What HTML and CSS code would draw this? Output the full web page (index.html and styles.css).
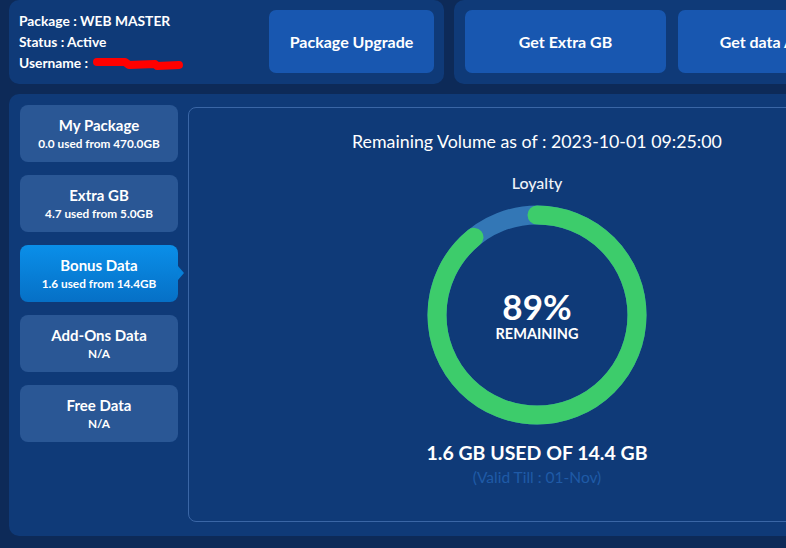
FILE: index.html
```html
<!DOCTYPE html>
<html>
<head>
  <title>Data Usage</title>
  <link rel="stylesheet" href="styles.css">
</head>
<body>
  <div class="page">
    <!-- top bar -->
    <div class="top-row">
      <div class="card info-card">
        <div class="info">
          <div>Package : WEB MASTER</div>
          <div>Status : Active</div>
          <div>Username : <span class="redact"><svg width="92" height="14" viewBox="0 0 92 14"><path d="M4 5 L32 5 L36 8 L62 7 L64 9 L86 8" stroke="#ff0000" stroke-width="8" fill="none" stroke-linejoin="round" stroke-linecap="round"/></svg></span></div>
        </div>
        <button class="btn btn-upgrade">Package Upgrade</button>
      </div>
      <div class="card actions-card">
        <button class="btn btn-action">Get Extra GB</button>
        <button class="btn btn-action">Get data Add-on</button>
      </div>
    </div>

    <!-- usage -->
    <div class="card main-card">
      <ul class="side-list">
        <li class="side-item">
          <div class="side-title">My Package</div>
          <div class="side-sub">0.0 used from 470.0GB</div>
        </li>
        <li class="side-item">
          <div class="side-title">Extra GB</div>
          <div class="side-sub">4.7 used from 5.0GB</div>
        </li>
        <li class="side-item active">
          <div class="side-title">Bonus Data</div>
          <div class="side-sub">1.6 used from 14.4GB</div>
        </li>
        <li class="side-item">
          <div class="side-title">Add-Ons Data</div>
          <div class="side-sub">N/A</div>
        </li>
        <li class="side-item">
          <div class="side-title">Free Data</div>
          <div class="side-sub">N/A</div>
        </li>
      </ul>

      <div class="usage-panel">
        <div class="usage-date">Remaining Volume as of : 2023-10-01 09:25:00</div>
        <div class="usage-name">Loyalty</div>
        <div class="ring">
          <svg width="220" height="220" viewBox="0 0 220 220">
            <circle cx="110" cy="110" r="100" fill="none" stroke="#3377b6" stroke-width="19"/>
            <circle cx="110" cy="110" r="100" fill="none" stroke="#3dcc6b" stroke-width="19"
              stroke-linecap="round" stroke-dasharray="559.2 628.3" transform="rotate(-90 110 110)"/>
          </svg>
          <div class="ring-label">
            <div class="ring-percent">89%</div>
            <div class="ring-text">REMAINING</div>
          </div>
        </div>
        <div class="usage-total">1.6 GB USED OF 14.4 GB</div>
        <div class="usage-valid">(Valid Till : 01-Nov)</div>
      </div>
    </div>
  </div>
</body>
</html>
```

FILE: styles.css
```css
body {
  margin: 0;
  background-color: #0d2a58;
  font-family: Lato, "Open Sans", sans-serif;
  color: #ffffff;
  overflow: hidden;
}

.page {
  width: 900px;
  padding: 0 9px;
}

.card {
  background-color: #0f3a78;
  border-radius: 10px;
}

.top-row {
  display: flex;
  gap: 10px;
  margin-bottom: 10px;
}

.info-card {
  width: 435px;
  flex-shrink: 0;
  height: 84px;
  box-sizing: border-box;
  padding: 9px 10px 11px 10px;
  display: flex;
  justify-content: space-between;
  align-items: center;
}

.info {
  font-size: 13.8px;
  font-weight: 700;
  line-height: 21px;
}

.redact {
  display: inline-block;
  vertical-align: middle;
  margin-left: 1px;
}

.redact svg {
  display: block;
}

.btn {
  background-color: #1857b0;
  color: #ffffff;
  border: none;
  border-radius: 7px;
  font-family: Lato, "Open Sans", sans-serif;
  font-size: 16px;
  font-weight: 700;
  height: 63px;
  white-space: nowrap;
}

.btn-upgrade {
  width: 165px;
}

.actions-card {
  flex: 1;
  height: 84px;
  box-sizing: border-box;
  padding: 10px 11px 11px 11px;
  display: flex;
  gap: 12px;
}

.btn-action {
  width: 201px;
  flex-shrink: 0;
}

.main-card {
  display: flex;
  gap: 10px;
  padding: 11px 11px 14px 11px;
  height: 442px;
  box-sizing: border-box;
}

.side-list {
  list-style-type: none;
  margin: 0;
  padding: 0;
  width: 158px;
  flex-shrink: 0;
  display: flex;
  flex-direction: column;
  gap: 13px;
}

.side-item {
  position: relative;
  height: 57px;
  box-sizing: border-box;
  padding-top: 11px;
  background-color: #2a5795;
  border-radius: 8px;
  text-align: center;
}

.side-item.active {
  background: linear-gradient(#0a8fe9, #0670c6);
}

.side-item.active::after {
  content: "";
  position: absolute;
  right: -6px;
  top: 21px;
  border-top: 7px solid transparent;
  border-bottom: 7px solid transparent;
  border-left: 6px solid #0880d8;
}

.side-title {
  font-size: 15px;
  font-weight: 700;
  line-height: 18px;
}

.side-sub {
  font-size: 11.8px;
  font-weight: 700;
  line-height: 14px;
  margin-top: 3px;
}

.usage-panel {
  width: 698px;
  flex-shrink: 0;
  margin-top: 2px;
  border: 1px solid #3a66a6;
  border-radius: 8px;
  box-sizing: border-box;
  text-align: center;
  padding-top: 23px;
}

.usage-date {
  font-size: 17.8px;
  line-height: 20px;
}

.usage-name {
  font-size: 16px;
  font-weight: 500;
  line-height: 18px;
  margin-top: 23px;
  color: #eef2f8;
}

.ring {
  position: relative;
  width: 220px;
  height: 220px;
  margin: 13px auto 0 auto;
}

.ring svg {
  display: block;
}

.ring-label {
  position: absolute;
  left: 0;
  right: 0;
  top: 82px;
}

.ring-percent {
  font-size: 35px;
  font-weight: 700;
  line-height: 38px;
}

.ring-text {
  font-size: 14.5px;
  font-weight: 700;
  line-height: 16px;
  margin-top: 1px;
}

.usage-total {
  font-size: 19.5px;
  font-weight: 700;
  line-height: 24px;
  margin-top: 16px;
}

.usage-valid {
  font-size: 15.5px;
  line-height: 18px;
  margin-top: 3px;
  color: #1f5aa7;
}
```
